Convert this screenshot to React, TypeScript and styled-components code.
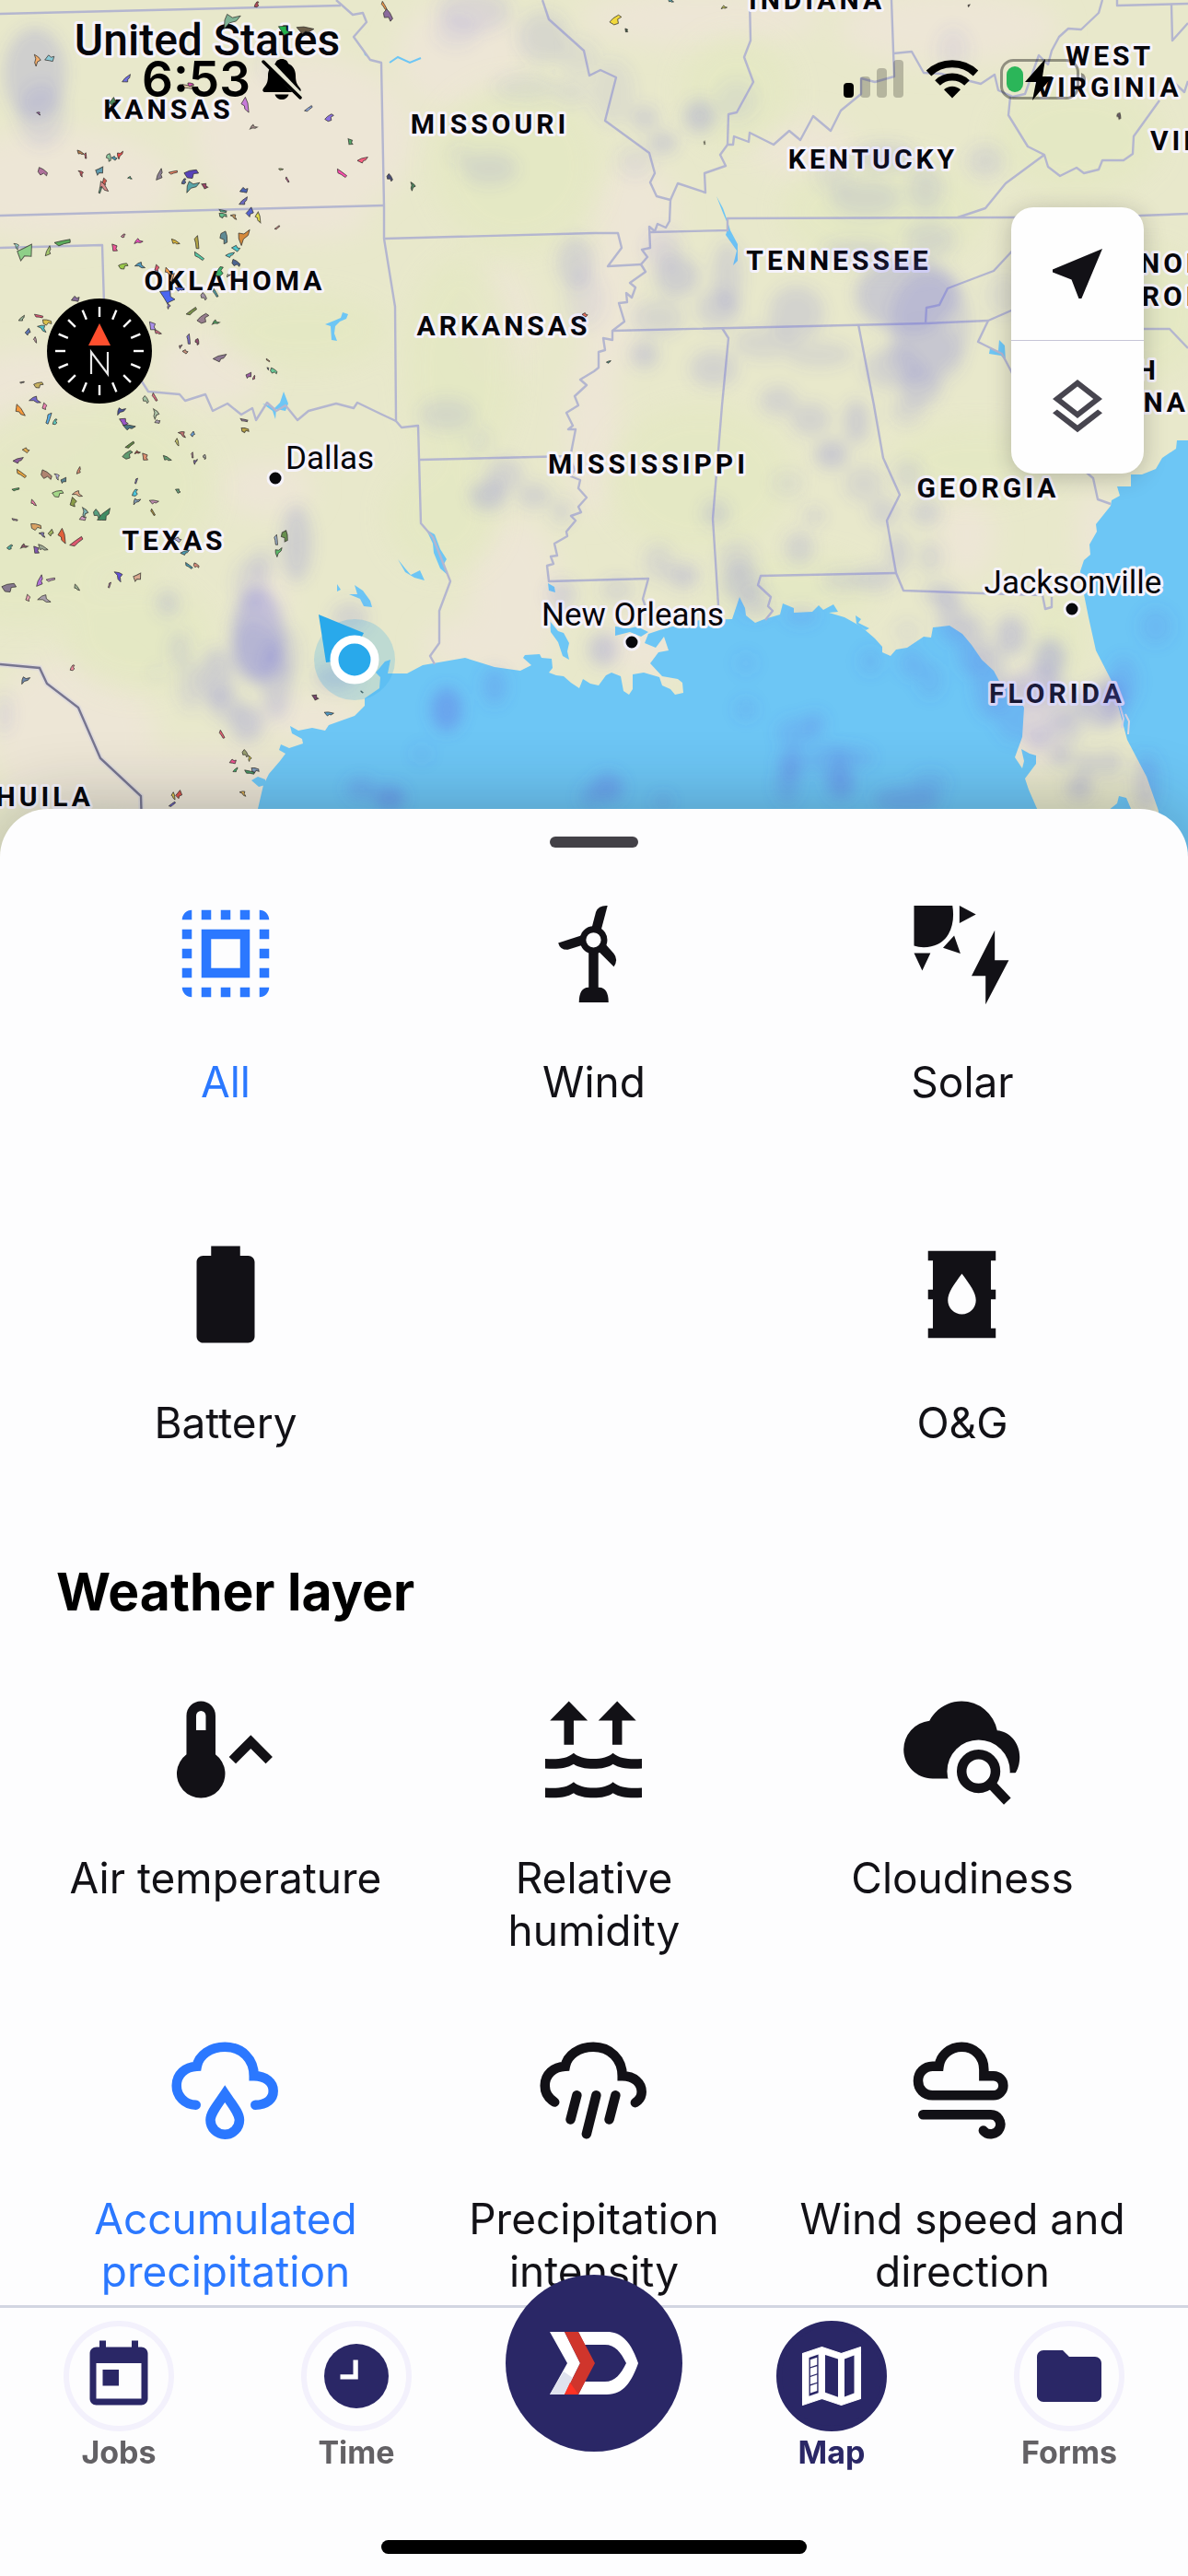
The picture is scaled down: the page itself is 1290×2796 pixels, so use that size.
import React from "react";
import styled, { createGlobalStyle } from "styled-components";
import { MdOutlineLayers, MdNearMe, MdFolder } from "react-icons/md";

const GlobalStyle = createGlobalStyle`
  *, *::before, *::after { box-sizing: border-box; }
  body {
    margin: 0;
    background: #fdfdfe;
    font-family: Inter, "Liberation Sans", sans-serif;
    -webkit-font-smoothing: antialiased;
  }
  button { font: inherit; color: inherit; background: none; border: 0; padding: 0; cursor: pointer; }
`;

const Page = styled.div`
  display: flex;
  flex-direction: column;
  min-height: 100vh;
`;

/* ---------- map ---------- */

const MapStage = styled.section`
  position: relative;
  height: 930px;
  overflow: hidden;
  background: #e8e8cb;
`;

const MapCanvas = styled.svg`
  display: block;
  width: 100%;
  height: 100%;
`;

const MapLabel = styled.text<{ $kind: "state" | "city" | "country" }>`
  font-family: Roboto, "Liberation Sans", sans-serif;
  font-size: ${(p) => ({ state: 30, city: 35, country: 48 })[p.$kind]}px;
  font-weight: ${(p) => ({ state: 700, city: 400, country: 500 })[p.$kind]};
  letter-spacing: ${(p) => (p.$kind === "state" ? 4 : 0)}px;
  fill: #06060a;
  stroke: #f6f3fb;
  stroke-width: 6px;
  stroke-linejoin: round;
  paint-order: stroke;
`;

type Point = [number, number];

const waterways = [
  "280,930 280,878 286,852 292,840 304,826 310,818 303,814 305,808 314,812 329,807 328,802 317,796 315,788 324,793 339,790 353,793 357,787 385,777 396,766 396,758 412,747 413,735 408,730 418,718 424,716 421,731 442,731 459,722 505,714 537,724 565,728 577,722 568,714 570,711 586,710 588,714 599,715 600,725 596,730 604,733 612,734 620,741 629,747 633,737 641,742 650,744 658,733 664,730 674,734 677,750 683,754 687,748 687,732 699,730 716,735 719,744 728,748 733,754 742,752 741,741 736,737 719,734 706,720 715,708 726,706 721,691 712,703 700,698 704,688 716,684 730,680 760,673 795,672 803,648 809,660 810,668 820,676 830,672 847,667 850,655 862,660 862,665 882,664 889,657 894,662 905,656 910,664 900,665 917,670 935,680 950,693 958,702 958,708 967,712 973,705 985,703 1003,691 1011,692 1013,681 1031,679 1045,688 1055,700 1066,716 1079,728 1086,741 1100,750 1112,768 1110,800 1102,822 1110,834 1112,826 1109,813 1118,818 1125,820 1125,829 1113,845 1117,857 1127,880 1127,930",
  "1258,930 1258,880 1245,843 1224,803 1207,739 1190,706 1182,670 1176,640 1173,620 1177,608 1184,602 1183,591 1191,577 1190,569 1206,549 1207,543 1216,538 1213,528 1228,528 1228,515 1240,515 1255,509 1262,497 1277,487 1278,478 1290,478 1290,930",
  "1203,880 1213,872 1215,864 1223,866 1229,880",
  "353,352 363,348 370,345 372,339 378,341 376,346 369,349 364,354 363,362 366,370 360,369 359,354",
  "285,438 292,440 298,443 304,437 308,425 313,438 310,446 300,444 299,455 296,446",
  "778,213 785,226 790,240 793,250 801,265 801,283 796,288 800,272 788,255 791,245 785,231",
  "393,51 400,62 396,60",
  "463,575 472,580 478,596 485,607 482,612 486,624 478,617 471,600 470,590",
  "432,607 440,617 446,624 456,619 461,630 450,627 440,621",
  "366,634 370,640 366,642",
  "385,635 394,641 402,652 404,659 395,658 391,650 379,645 388,645",
  "595,633 602,637 603,643 596,641",
  "597,674 606,685 612,687 618,698 616,707 618,716 611,712 606,697 598,686",
  "668,680 683,682 692,680 704,686 696,691 684,686 668,690",
  "273,847 280,843 288,846 288,852 281,854",
  "1085,369 1091,375 1092,392 1087,386 1074,384 1075,378 1084,381",
  "929,668 935,672 932,676 944,682 940,684 930,677",
];

const borders = [
  "0,15 370,6",
  "365,0 383,16 394,14 398,24 384,40 402,65 414,68 417,224 417,259 429,333 430,457 436,464 454,462 457,568 470,583 489,631 477,663 477,698 467,712 472,721",
  "0,234 417,223",
  "417,259 645,253 671,253 675,269 660,289 696,287",
  "456,499 620,495",
  "0,269 111,266 113,330 145,400 161,425 195,428 201,435 223,428 231,446 247,438 262,450 274,443 278,456 290,437 300,446 310,440 323,456 335,446 365,438 384,443 388,437 415,450 430,457",
  "589,0 596,21 634,55 640,82 652,76 669,84 657,131 705,166 711,188 706,198 713,213 728,217 727,240 723,247 714,243 711,251 705,246 706,269 697,271 703,279 696,287 701,295 684,307 690,312 686,323 680,318 681,328 672,329 678,349 665,359 665,369 655,367 657,380 650,382 650,399 645,403 630,412 637,418 624,430 628,440 615,448 622,462 617,466 625,466 619,497 624,510 620,517 630,521 628,530 637,540 628,550 631,556 620,560 625,565 615,577 616,582 602,590 605,603 598,604 601,612 594,614 596,631 704,628 698,650 704,668",
  "706,252 790,250 790,237 1098,236 1238,234 1290,232",
  "728,217 736,199 766,209 765,188 788,180 782,168 790,157 796,157 797,148 813,154 814,144 840,157 857,142 869,152 883,126 902,142 913,120 935,102 935,85 950,89 971,83 968,0",
  "814,0 815,44 808,62 818,89 800,122 791,124 790,157",
  "970,58 990,56 1003,79 1022,80 1065,91 1080,81 1084,98 1100,105 1113,102 1128,60 1138,70 1142,55 1150,40 1160,31 1174,32 1193,14 1197,0",
  "1097,105 1095,125 1116,159 1134,168 1138,181 1151,191 1169,182 1177,188 1193,184 1197,174 1220,174 1230,167 1231,148 1259,109",
  "1134,168 1092,199 1070,226 1040,236",
  "665,359 1005,351 1073,348 1105,334",
  "1105,266 1079,294 1029,313 1020,331 1006,334 1005,351",
  "1073,348 1062,371 1088,384 1098,403 1130,470 1180,513 1187,519 1192,542 1206,547",
  "784,356 791,367 784,440 774,563 780,657",
  "932,352 949,440 959,497 977,537 963,565 973,622 981,641 1066,644 1132,646 1135,661 1142,659 1142,648",
  "973,622 826,625 823,635 837,648 834,658 839,663 831,673",
  "1242,357 1270,357 1290,378",
  "1213,0 1213,6 1290,4",
  "1272,5 1273,44 1290,25",
  "1270,85 1286,100 1290,88",
];

/* [cx, cy, rx, ry] of pale ground and greener ground */
const sandPatches = [
  [330, 150, 120, 90], [60, 200, 130, 60], [330, 240, 70, 20], [690, 235, 45, 60], [660, 340, 30, 70],
  [645, 470, 30, 90], [560, 650, 50, 90], [520, 700, 60, 30], [760, 20, 130, 30], [1030, 30, 120, 40],
  [30, 440, 80, 60], [80, 800, 90, 90], [220, 860, 120, 50], [340, 780, 60, 25], [290, 650, 24, 30],
  [700, 700, 40, 40], [500, 60, 70, 60], [1120, 780, 30, 60], [1050, 580, 30, 50], [290, 530, 50, 30],
  [1190, 580, 20, 50], [540, 350, 40, 60], [870, 160, 60, 30], [230, 400, 60, 40],
] as const;
const greenPatches = [
  [560, 180, 90, 90], [1170, 150, 90, 60], [500, 400, 60, 120], [760, 520, 100, 80], [860, 640, 90, 40],
  [480, 560, 60, 60], [90, 530, 140, 100], [960, 230, 110, 60], [800, 100, 60, 60], [20, 620, 90, 60],
  [1060, 500, 90, 40], [1150, 690, 30, 50], [150, 690, 80, 60], [330, 360, 90, 40], [1250, 340, 60, 70],
] as const;

/* precipitation cells: [cx, cy, rx, ry, strength] */
const rainCells = [
  [38, 80, 34, 50, 5], [45, 125, 26, 35, 3], [515, 12, 40, 24, 3], [495, 35, 24, 18, 2], [590, 40, 28, 28, 3],
  [628, 62, 22, 20, 2], [570, 95, 34, 15, 2], [620, 100, 20, 14, 2], [532, 183, 30, 18, 3], [500, 168, 12, 10, 2],
  [625, 285, 20, 28, 4], [635, 325, 22, 30, 2], [295, 72, 12, 14, 2], [665, 100, 24, 36, 2], [700, 128, 15, 14, 4],
  [760, 126, 17, 18, 6], [720, 155, 15, 12, 5], [690, 175, 20, 18, 2], [800, 110, 22, 22, 2], [1035, 55, 18, 26, 2],
  [960, 170, 34, 16, 3], [905, 190, 20, 20, 2], [940, 215, 38, 20, 3], [1005, 205, 20, 24, 3], [1070, 175, 20, 18, 3],
  [735, 300, 24, 22, 5], [715, 345, 28, 20, 3], [720, 270, 20, 20, 3], [790, 300, 16, 38, 4], [780, 335, 24, 20, 4],
  [865, 340, 30, 30, 4], [700, 385, 15, 15, 5], [775, 400, 26, 20, 4], [830, 372, 34, 18, 3], [890, 385, 36, 14, 3],
  [985, 320, 56, 40, 6], [1010, 350, 44, 56, 4], [1005, 385, 42, 34, 3],
  [968, 400, 30, 22, 4], [1000, 420, 22, 20, 5], [1010, 260, 28, 20, 3], [930, 272, 38, 12, 3], [1090, 320, 20, 24, 2],
  [845, 435, 20, 16, 4], [880, 455, 22, 18, 4], [930, 458, 14, 24, 5], [903, 493, 18, 16, 6], [985, 445, 18, 16, 3],
  [855, 525, 18, 14, 2], [938, 525, 22, 20, 3], [986, 515, 15, 16, 3], [777, 557, 15, 15, 4], [960, 556, 17, 15, 4],
  [1005, 556, 17, 15, 4], [884, 560, 12, 10, 3], [868, 595, 16, 18, 4], [975, 600, 13, 22, 4], [1010, 605, 13, 18, 3],
  [742, 625, 17, 14, 5], [715, 610, 16, 20, 3], [805, 632, 22, 20, 5], [800, 605, 20, 18, 3], [820, 655, 18, 16, 4],
  [915, 630, 22, 12, 3], [950, 628, 22, 14, 4], [1020, 645, 16, 12, 5], [1033, 670, 15, 28, 5], [1055, 700, 16, 34, 5],
  [1075, 740, 18, 40, 5], [1098, 690, 17, 22, 6], [1140, 715, 17, 22, 7], [1125, 742, 26, 18, 5], [1150, 765, 32, 24, 4],
  [1195, 765, 22, 26, 6], [1210, 760, 14, 26, 5], [1128, 800, 15, 15, 6], [1158, 792, 18, 16, 4], [1152, 820, 12, 11, 6],
  [1180, 830, 13, 14, 4], [1205, 828, 13, 14, 4], [1172, 855, 14, 13, 6], [1245, 850, 14, 32, 5], [1100, 770, 20, 34, 4],
  [1255, 680, 18, 20, 3], [1220, 740, 16, 28, 4], [865, 795, 22, 16, 4], [885, 785, 11, 12, 5], [860, 828, 14, 17, 7],
  [855, 852, 13, 20, 5], [900, 825, 22, 18, 4], [913, 850, 15, 17, 8], [925, 822, 24, 12, 4], [945, 718, 12, 14, 3],
  [990, 720, 13, 16, 4], [1010, 738, 14, 20, 3], [810, 770, 12, 12, 3], [810, 720, 12, 12, 2], [870, 668, 18, 10, 4],
  [660, 855, 17, 16, 8], [720, 870, 10, 8, 5], [985, 868, 36, 14, 6], [1010, 850, 20, 14, 3], [485, 770, 17, 24, 9],
  [537, 745, 13, 20, 5], [392, 856, 16, 12, 6], [423, 866, 17, 13, 9], [458, 818, 12, 10, 2], [640, 865, 10, 14, 5],
  [280, 690, 28, 52, 8], [275, 705, 24, 30, 3], [235, 735, 18, 32, 5], [245, 765, 18, 18, 4], [207, 745, 14, 26, 3],
  [268, 785, 18, 20, 6], [300, 740, 16, 42, 5], [310, 710, 16, 30, 3], [322, 590, 17, 42, 5], [285, 612, 13, 18, 3],
  [272, 632, 18, 26, 3], [182, 655, 13, 15, 4], [195, 705, 12, 20, 3], [170, 730, 6, 8, 2], [365, 735, 24, 14, 5],
  [380, 670, 20, 16, 4], [530, 538, 20, 16, 6], [548, 515, 20, 18, 4], [580, 538, 18, 14, 4], [485, 450, 30, 18, 3],
  [520, 478, 12, 14, 2], [610, 555, 12, 14, 3], [610, 645, 16, 16, 4], [655, 705, 16, 18, 6], [670, 640, 18, 14, 3],
  [5, 775, 8, 22, 3], [985, 685, 14, 12, 2],
] as const;

/* solar parcels: [x, y, size, colour] */
const parcels: [number, number, number, string][] = [
  [279, 5, 4, "#b5485a"], [250, 22, 14, "#7fb295"], [308, 33, 9, "#22b14c"], [331, 33, 11, "#6b5d49"], [417, 6, 6, "#f2994a"],
  [421, 17, 8, "#8a6a9c"], [40, 65, 8, "#f4ae6b"], [54, 64, 7, "#89c9d6"], [138, 86, 7, "#6f6fe0"], [204, 94, 8, "#dfc9a8"],
  [207, 92, 4, "#d64fb0"], [42, 123, 3, "#b36acb"], [122, 110, 6, "#4b8a5c"], [266, 114, 10, "#c77ad9"], [335, 118, 6, "#8aa4dd"],
  [358, 128, 6, "#8b70e0"], [275, 138, 5, "#b59a9a"], [380, 154, 5, "#55a96a"], [87, 166, 5, "#b37b4e"], [93, 169, 4, "#e2536d"],
  [118, 171, 5, "#8cc7a0"], [130, 168, 6, "#ee4a4a"], [124, 172, 4, "#4a98b5"], [394, 174, 7, "#ff5f82"], [371, 188, 8, "#ff4fb0"],
  [46, 187, 7, "#b0719c"], [88, 188, 5, "#c0535d"], [108, 185, 7, "#5f9cb0"], [174, 190, 8, "#8b7f93"], [188, 187, 6, "#f08362"],
  [208, 189, 9, "#5843b8"], [141, 193, 3, "#49b58c"], [113, 197, 5, "#d15b50"], [112, 203, 8, "#d98c8c"], [109, 206, 5, "#5c9b80"],
  [200, 197, 4, "#52629a"], [208, 202, 11, "#59a5a8"], [222, 202, 5, "#a0456b"], [305, 184, 3, "#9db56e"], [312, 195, 4, "#c5639a"],
  [423, 193, 5, "#4a4f78"], [448, 202, 6, "#4d8560"], [265, 207, 6, "#4b63b3"], [265, 219, 7, "#6c6ac0"], [242, 229, 5, "#4fb59a"],
  [242, 234, 5, "#63c08c"], [254, 235, 5, "#c99a62"], [271, 230, 7, "#5563cf"], [280, 236, 7, "#e6e04c"], [301, 247, 4, "#ce8d8b"],
  [134, 256, 3, "#c97f9b"], [150, 262, 6, "#ee4fc0"], [124, 269, 6, "#ee5797"], [190, 263, 6, "#d5b23a"], [214, 263, 9, "#b3a546"],
  [243, 258, 8, "#5f8b95"], [264, 257, 12, "#d58a3c"], [256, 270, 6, "#4cc7cc"], [250, 277, 6, "#52c9cc"], [216, 278, 8, "#56c9a6"],
  [256, 286, 6, "#4c6590"], [18, 267, 5, "#9bdcd3"], [27, 273, 14, "#8ecf88"], [53, 273, 7, "#a5c86b"], [68, 263, 11, "#5bab5b"],
  [134, 289, 6, "#9bc94a"], [152, 288, 7, "#4f9ac0"], [170, 291, 5, "#de5872"], [182, 295, 6, "#ef9c4c"], [187, 301, 6, "#e8a878"],
  [239, 295, 7, "#3bb36c"], [248, 299, 3, "#b4b4a4"], [181, 322, 12, "#4a66f0"], [195, 314, 6, "#4a66f0"], [234, 318, 6, "#4f9ea6"],
  [221, 322, 5, "#a494a8"], [183, 332, 4, "#8e7fd6"], [82, 325, 6, "#856c98"], [24, 346, 5, "#8fae92"], [42, 343, 6, "#e8577b"],
  [51, 350, 6, "#d9c04c"], [46, 356, 7, "#4cc0c7"], [30, 360, 5, "#6078b5"], [38, 369, 4, "#c29bab"], [208, 338, 8, "#79904a"],
  [221, 346, 8, "#977e8e"], [234, 350, 5, "#50b067"], [165, 354, 7, "#a98fea"], [171, 361, 5, "#c96c80"], [205, 368, 7, "#8072d3"],
  [214, 371, 4, "#934c70"], [196, 376, 3, "#9a6b88"], [201, 382, 4, "#c8907a"], [239, 389, 9, "#8e7893"], [291, 391, 3, "#c89070"],
  [297, 403, 5, "#67c795"], [291, 400, 2, "#4b559a"], [270, 407, 5, "#9c5ca5"], [276, 410, 3, "#d86292"], [24, 415, 3, "#8f8f92"],
  [42, 418, 6, "#c6b060"], [38, 434, 8, "#7368c8"], [48, 441, 5, "#ee82b5"], [21, 446, 9, "#f5993c"], [53, 454, 8, "#57b3ee"],
  [60, 458, 4, "#5ecac0"], [131, 446, 7, "#48529d"], [134, 458, 7, "#9a55c9"], [140, 464, 8, "#4a7481"], [168, 431, 6, "#e06c86"],
  [158, 434, 5, "#a5c5a5"], [169, 449, 7, "#b3cbad"], [171, 458, 4, "#b0a5b8"], [141, 420, 5, "#d88140"], [265, 456, 5, "#9a80a8"],
  [266, 467, 5, "#baa348"], [198, 471, 6, "#bf7272"], [209, 471, 4, "#6aa0d8"], [192, 480, 5, "#c4c26a"], [141, 483, 7, "#5f8745"],
  [139, 494, 7, "#5f9b70"], [149, 491, 4, "#9d4b48"], [157, 496, 6, "#dd9070"], [181, 498, 6, "#5f9b70"], [209, 494, 4, "#c993b0"],
  [222, 496, 3, "#a5a5a5"], [212, 501, 4, "#7b67a8"], [28, 489, 5, "#e3ae52"], [20, 500, 7, "#8f5fa0"], [23, 514, 8, "#e5a440"],
  [50, 516, 8, "#af8470"], [62, 517, 5, "#b9b4e6"], [69, 521, 5, "#568594"], [86, 511, 5, "#d98b6d"], [17, 531, 5, "#4fae64"],
  [63, 536, 7, "#a4d788"], [84, 536, 7, "#e0a785"], [79, 545, 7, "#8a9c49"], [36, 546, 5, "#eb7ca6"], [148, 522, 4, "#8377d6"],
  [147, 535, 5, "#4cc8dd"], [148, 544, 6, "#7f99b0"], [193, 533, 4, "#65a07b"], [167, 545, 6, "#bc8caf"], [166, 556, 5, "#a58c3c"],
  [105, 558, 6, "#57a080"], [92, 556, 7, "#7fb8ba"], [90, 563, 5, "#d29abf"], [114, 560, 11, "#3f8c62"], [16, 564, 4, "#b28cba"],
  [39, 572, 7, "#d9a263"], [46, 580, 5, "#7f77b5"], [55, 578, 5, "#a0b560"], [67, 582, 10, "#e1603b"], [83, 588, 10, "#dd5870"],
  [11, 594, 4, "#52b0a0"], [26, 593, 5, "#9a5a75"], [39, 597, 6, "#8259b3"], [46, 595, 7, "#9da893"], [300, 586, 7, "#9db3cf"],
  [309, 582, 7, "#68904f"], [302, 599, 7, "#5dbb6b"], [193, 586, 5, "#b5add9"], [201, 600, 6, "#4c9ab0"], [205, 614, 6, "#4b9ab0"],
  [213, 614, 4, "#d98a78"], [129, 625, 8, "#6152d6"], [149, 626, 7, "#d9a890"], [44, 631, 8, "#b072d9"], [55, 629, 6, "#c89bc9"],
  [10, 638, 9, "#877a90"], [48, 650, 9, "#a9a0ac"], [30, 649, 5, "#e5a0b0"], [83, 638, 5, "#9db595"], [119, 635, 4, "#c07fb5"],
  [79, 725, 4, "#ec8b9c"], [27, 738, 7, "#6f89ab"], [342, 757, 5, "#7a456f"], [357, 775, 6, "#4c98c7"], [241, 797, 6, "#ee5f76"],
  [266, 818, 5, "#9aa070"], [271, 823, 4, "#ded34a"], [253, 827, 5, "#ee5490"], [256, 836, 4, "#45b670"], [271, 838, 7, "#489b67"],
  [277, 836, 5, "#7f98b8"], [264, 861, 5, "#e8b552"], [194, 862, 6, "#dd5449"], [188, 864, 5, "#e0c84b"], [187, 873, 5, "#6c5fd0"],
  [669, 22, 8, "#f2d93c"], [786, 8, 4, "#c6cb58"], [680, 33, 3, "#42614c"], [728, 1, 4, "#58a9b0"], [765, 155, 2, "#b3b36a"],
  [1215, 126, 4, "#6b5d6a"], [1052, 6, 2, "#655055"], [635, 342, 4, "#e86a58"], [661, 393, 3, "#4c9b8c"], [393, 751, 2, "#5a9b78"],
];

const parcelShapes = [
  "-1,-.5 -.2,-.7 .8,-.6 1,.1 .3,0 0,.8 -.7,.5",
  "-.9,.4 -.4,-.4 .1,-.8 .3,-.1 1,.3 .4,.5 -.2,.2",
  "-.6,-.9 .5,-.7 .4,.1 .8,.6 -.1,.9 -.3,.1",
  "-1,-.2 -.2,-.5 1,-.5 .5,.1 .1,.1 -.2,.6 -.6,.2",
  "-.8,-.7 .1,-.2 .9,.3 .7,.7 0,.3 -.6,.1",
];

const placeNames: { text: string; at: Point; kind: "state" | "city" | "country"; anchor?: "end" | "middle" }[] = [
  { text: "United States", at: [225, 60], kind: "country", anchor: "middle" },
  { text: "KANSAS", at: [183, 129], kind: "state", anchor: "middle" },
  { text: "MISSOURI", at: [532, 145], kind: "state", anchor: "middle" },
  { text: "OKLAHOMA", at: [255, 315], kind: "state", anchor: "middle" },
  { text: "ARKANSAS", at: [547, 364], kind: "state", anchor: "middle" },
  { text: "INDIANA", at: [887, 10], kind: "state", anchor: "middle" },
  { text: "KENTUCKY", at: [948, 183], kind: "state", anchor: "middle" },
  { text: "TENNESSEE", at: [911, 293], kind: "state", anchor: "middle" },
  { text: "WEST", at: [1205, 71], kind: "state", anchor: "middle" },
  { text: "VIRGINIA", at: [1204, 105], kind: "state", anchor: "middle" },
  { text: "VIRGINIA", at: [1249, 163], kind: "state" },
  { text: "NORTH", at: [1238, 296], kind: "state" },
  { text: "CAROLINA", at: [1192, 332], kind: "state" },
  { text: "SOUTH", at: [1259, 412], kind: "state", anchor: "end" },
  { text: "CAROLINA", at: [1291, 447], kind: "state", anchor: "end" },
  { text: "MISSISSIPPI", at: [704, 514], kind: "state", anchor: "middle" },
  { text: "GEORGIA", at: [1073, 540], kind: "state", anchor: "middle" },
  { text: "TEXAS", at: [189, 597], kind: "state", anchor: "middle" },
  { text: "FLORIDA", at: [1148, 763], kind: "state", anchor: "middle" },
  { text: "COAHUILA", at: [102, 875], kind: "state", anchor: "end" },
  { text: "Dallas", at: [358, 509], kind: "city", anchor: "middle" },
  { text: "New Orleans", at: [687, 679], kind: "city", anchor: "middle" },
  { text: "Jacksonville", at: [1165, 644], kind: "city", anchor: "middle" },
];

const cityDots: Point[] = [[299, 519], [686, 697], [1164, 661]];

function WeatherMap() {
  return (
    <MapCanvas viewBox="0 0 1290 930" preserveAspectRatio="xMidYMin slice" role="img" aria-label="Weather map">
      <defs>
        <filter id="soft" x="-40%" y="-40%" width="180%" height="180%">
          <feGaussianBlur stdDeviation="14" />
        </filter>
        <filter id="cells" x="0" y="0" width="1290" height="930" filterUnits="userSpaceOnUse">
          <feGaussianBlur stdDeviation="8" />
        </filter>
      </defs>
      <rect width="1290" height="930" fill="#e8e8cb" />
      <g fill="#ede6d6" filter="url(#soft)">
        {sandPatches.map(([x, y, rx, ry], i) => <ellipse key={i} cx={x} cy={y} rx={rx} ry={ry} />)}
      </g>
      <g fill="#e4e8c3" opacity="0.8" filter="url(#soft)">
        {greenPatches.map(([x, y, rx, ry], i) => <ellipse key={i} cx={x} cy={y} rx={rx} ry={ry} />)}
      </g>
      <g fill="#6dc6f5">
        {waterways.map((points, i) => <polygon key={i} points={points} />)}
      </g>
      <path d="M423 68L432 62L445 68L457 63" fill="none" stroke="#6dc6f5" strokeWidth="2" />
      <path d="M1216 766l4 14l-2 10M1222 775l4 8l-1 14" fill="none" stroke="#ded9df" strokeWidth="2" />
      <g fill="none" stroke="#b4b6cf" strokeWidth="2.4" strokeLinejoin="round">
        {borders.map((points, i) => <polyline key={i} points={points} />)}
      </g>
      <polyline points="0,721 43,725 51,742 85,768 109,823 153,864 155,930" fill="none" stroke="#e0dcdc" strokeWidth="6" />
      <polyline points="0,721 43,725 51,742 85,768 109,823 153,864 155,930" fill="none" stroke="#77758f" strokeWidth="2.4" />
      {cityDots.map(([x, y]) => (
        <circle key={x} cx={x} cy={y} r="8" fill="#08080c" stroke="#f6f3fb" strokeWidth="3" />
      ))}
      {placeNames.map((p, i) => (
        <MapLabel key={i} $kind={p.kind} x={p.at[0]} y={p.at[1]} textAnchor={p.anchor ?? "start"}>
          {p.text}
        </MapLabel>
      ))}
      <g fill="#6464e0" filter="url(#cells)">
        {rainCells.map(([x, y, rx, ry, s], i) => (
          <ellipse key={i} cx={x} cy={y} rx={rx} ry={ry} opacity={s * 0.038} />
        ))}
      </g>
      <g stroke="#33302c" strokeWidth="1" strokeOpacity="0.75">
        {parcels.map(([x, y, size, colour], i) => (
          <polygon
            key={i}
            points={parcelShapes[i % parcelShapes.length]}
            fill={colour}
            vectorEffect="non-scaling-stroke"
            transform={`translate(${x} ${y}) rotate(${(i % 7) * 24 - 60}) scale(${size * 0.85} ${size * 0.65})`}
          />
        ))}
      </g>
      <circle cx="385" cy="716" r="44" fill="#29a9eb" opacity="0.22" />
      <polygon points="346,667 395,687 380,716 354,719" fill="#29a9eb" />
      <circle cx="385" cy="716" r="22" fill="#29a9eb" stroke="#fff" strokeWidth="9" />
    </MapCanvas>
  );
}

const StatusBar = styled.header`
  position: absolute;
  top: 0;
  left: 0;
  right: 0;
  display: flex;
  align-items: center;
  justify-content: space-between;
  padding: 54px 110px 0 154px;
  color: #000;
`;

const StatusGroup = styled.div<{ $gap: number }>`
  display: flex;
  align-items: center;
  gap: ${(p) => p.$gap}px;
`;

const Clock = styled.time`
  font-size: 53px;
  line-height: 64px;
  font-weight: 600;
`;

const Compass = styled.button`
  position: absolute;
  top: 324px;
  left: 51px;
  width: 114px;
  height: 114px;
`;

const MapTools = styled.div`
  position: absolute;
  top: 225px;
  right: 48px;
  display: flex;
  flex-direction: column;
  width: 144px;
  border-radius: 24px;
  background: #fefefe;
  box-shadow: 0 4px 24px rgba(30, 30, 50, 0.25);
`;

const ToolButton = styled.button<{ $tone: string }>`
  display: grid;
  place-items: center;
  height: 144px;
  color: ${(p) => p.$tone};
  & + & { border-top: 1px solid #c6c5d6; height: 145px; }
`;

/* ---------- bottom sheet ---------- */

const Sheet = styled.main`
  position: relative;
  flex: 1;
  margin-top: -52px;
  padding: 30px 45px 8px;
  border-radius: 52px 52px 0 0;
  background: #fdfdfe;
  box-shadow: 0 0 80px rgba(20, 30, 40, 0.3);
`;

const Handle = styled.div`
  width: 96px;
  height: 12px;
  margin: 0 auto 52px;
  border-radius: 6px;
  background: #434147;
`;

const LayerGrid = styled.div`
  display: grid;
  grid-template-columns: repeat(3, minmax(0, 1fr));
  row-gap: 82px;
`;

const LayerButton = styled.button<{ $active?: boolean; $column?: number }>`
  display: flex;
  flex-direction: column;
  align-items: center;
  gap: 48px;
  min-height: 288px;
  padding: 0 18px;
  grid-column: ${(p) => p.$column ?? "auto"};
  color: ${(p) => (p.$active ? "#2b78ff" : "#121116")};
`;

const LayerIcon = styled.svg`
  display: block;
  flex: none;
  width: 126px;
  height: 126px;
  overflow: visible;
  fill: currentColor;
`;

const LayerName = styled.span`
  font-size: 46px;
  line-height: 57px;
  text-align: center;
`;

const SheetTitle = styled.h2`
  margin: 62px 0 72px 16px;
  font-size: 57px;
  line-height: 72px;
  font-weight: 700;
  color: #000;
`;

const strokeProps = {
  fill: "none",
  stroke: "currentColor",
  strokeWidth: 2,
  strokeLinecap: "round" as const,
};

const icons: Record<string, React.ReactNode> = {
  all: (
    <path d="M3 5h2V3c-1.100 0-2 .9-2 2zm0 8h2v-2H3v2zm4 8h2v-2H7v2zM3 9h2V7H3v2zm10-6h-2v2h2V3zm6 0v2h2c0-1.100-.9-2-2-2zM5 21v-2H3c0 1.100.9 2 2 2zm-2-4h2v-2H3v2zM9 3H7v2h2V3zm2 18h2v-2h-2v2zm8-8h2v-2h-2v2zm0 8c1.100 0 2-.9 2-2h-2v2zm0-12h2V7h-2v2zm0 8h2v-2h-2v2zm-4 4h2v-2h-2v2zm0-16h2V3h-2v2zM7 17h10V7H7v10zm2-8h6v6H9V9z" />
  ),
  wind: (
    <>
      <path d="M11.500 6.800L12.400 3.400Q12.900 2 14.800 2.100L13.500 7z" />
      <path d="M9.300 8.300L4.600 9.800Q5 11.300 6.600 11.200L9.800 10.200z" />
      <path d="M14.500 10.200L16.100 12Q17.100 13.300 16.100 14.700L12.900 11.500z" />
      <path d="M10.900 11h2v8h.2q1.900.1 1.900 3.100H8.900q0-3 1.900-3.100h.1z" />
      <circle cx="11.900" cy="9.200" r="2.200" fill="#fdfdfe" stroke="currentColor" strokeWidth="1.300" />
    </>
  ),
  solar: (
    <path d="M2 2.100H9.950C10.700 6.600 8.800 10.700 4 10.700Q2.900 10.700 2 10.400zM11.400 2.100L14.800 3.900L11.400 5.700zM10.300 8.300L11.600 12L8 10.800zM2 11.900H5.400L3.700 15.500zM18.700 7.200V13.400H21.600L16.800 22.500V16.600H13.900z" />
  ),
  battery: (
    <path d="M16.670 4H15V2H9v2H7.330C6.600 4 6 4.600 6 5.330v15.330C6 21.400 6.600 22 7.330 22h9.330c.74 0 1.340-.6 1.340-1.330V5.330C18 4.600 17.400 4 16.670 4z" />
  ),
  oil: (
    <>
      <path d="M4.900 3H18.900V5H17.900V11H18.900V13H17.900V19H18.900V21H4.900V19H5.900V13H4.900V11H5.900V5H4.900z" />
      <path fill="#fdfdfe" d="M11.900 7.700C10.200 10 9 11.600 9 13.200a2.900 2.900 0 0 0 5.800 0C14.800 11.600 13.600 10 11.900 7.700z" />
    </>
  ),
  temperature: (
    <path fillRule="evenodd" d="M3.900 5a3 3 0 0 1 6 0V13a5 5 0 1 1-6 0zM5.900 8H7.900V5a1 1 0 0 0-2 0zM17.200 9L21.700 13.500L20.300 14.900L17.200 11.800L14.100 14.900L12.700 13.500z" />
  ),
  humidity: (
    <>
      <path d="M6.800 2L10.700 6H7.800V11H5.800V6H2.900zM16.800 2L20.700 6H17.800V11H15.800V6H12.900z" />
      {[0, 6].map((dy) => (
        <path
          key={dy}
          transform={`translate(0 ${dy})`}
          d="M1.900 13.900C4.400 14 6.200 14 7.800 12.700C9.400 14.300 14.400 14.300 15.900 12.700C17.500 14 19.400 14 21.900 13.900V15.900C19.400 16 17.500 16 15.900 15C14.400 16.300 9.400 16.300 7.800 15C6.200 16 4.400 16 1.900 15.900z"
        />
      ))}
    </>
  ),
  cloudiness: (
    <>
      <path d="M19.200 8.040A7.490 7.490 0 0 0 11.850 2C8.960 2 6.450 3.640 5.200 6.040A5.994 5.994 0 0 0-.15 12c0 3.310 2.690 6 6 6h9l8-1c.6-.8 1-2 1-3.500 0-2.900-2.050-5.280-4.650-5.460z" />
      <circle cx="15.350" cy="16.500" r="6.500" fill="#fdfdfe" />
      <path d="M15.350 16.800H24V20H15.350z" fill="#fdfdfe" />
      <circle cx="15.350" cy="16.500" r="3.500" fill="none" stroke="currentColor" strokeWidth="2" />
      <path d="M17.700 18.900L21.300 22.700" stroke="currentColor" strokeWidth="2" />
    </>
  ),
  accumulated: (
    <g {...strokeProps} transform="translate(-0.15 0)">
      <path d="M6 15C3.500 14.900 2 13 2 11C2 8.700 3.800 7.100 6.200 7C6.600 4.700 9 3 12 3C15.500 3 18 5.500 18 9C20.500 9 22 10.400 22 12.100C22 13.800 20.600 15 18.300 15" />
      <path strokeLinejoin="miter" d="M12 12.700C10.300 15.200 9 16.700 9 18.100a3 3 0 0 0 6 0C15 16.700 13.700 15.200 12 12.700z" />
    </g>
  ),
  intensity: (
    <g {...strokeProps} transform="translate(-0.15 0)">
      <path d="M4 14.400C2.700 13.600 2 12.400 2 11C2 8.700 3.800 7.100 6.200 7C6.600 4.700 9 3 12 3C15.500 3 18 5.500 18 9C20.500 9 22 10.500 22 12.300C22 13.200 21.500 14 20.700 14.500" />
      <path d="M8.600 13L7.300 18M12.600 13L10.600 21M16.600 13L15.300 18" />
    </g>
  ),
  windSpeed: (
    <g {...strokeProps} transform="translate(-0.15 0)">
      <path d="M6 13C4.200 13 3 11.700 3 10C3 8.300 4.300 7 6 7H7.300C7.600 4.700 9.600 3 12 3C14.700 3 16.600 5 16.600 7.700V9H18.600A2 2 0 0 1 18.600 13z" />
      <path d="M4 17H18A2 2 0 1 1 16.500 20.300" />
    </g>
  ),
};

function Layer({ icon, name, active, column }: { icon: string; name: string; active?: boolean; column?: number }) {
  return (
    <LayerButton type="button" $active={active} $column={column} aria-pressed={!!active}>
      <LayerIcon viewBox="0 0 24 24" aria-hidden="true">{icons[icon]}</LayerIcon>
      <LayerName>{name}</LayerName>
    </LayerButton>
  );
}

/* ---------- tab bar ---------- */

const TabBar = styled.nav`
  position: relative;
  display: flex;
  flex-direction: column;
  align-items: center;
  padding-bottom: 24px;
  border-top: 3px solid #d2d6e2;
  background: #fdfdfe;
`;

const Tabs = styled.div`
  display: grid;
  grid-template-columns: repeat(5, 1fr);
  width: 100%;
  padding-top: 14px;
`;

const Tab = styled.a<{ $active?: boolean }>`
  display: flex;
  flex-direction: column;
  align-items: center;
  gap: 2px;
  font-size: 34px;
  line-height: 42px;
  font-weight: 700;
  text-decoration: none;
  color: ${(p) => (p.$active ? "#2a2766" : "#636165")};
`;

const TabCircle = styled.span<{ $active?: boolean }>`
  display: grid;
  place-items: center;
  width: 120px;
  height: 120px;
  border: 6px solid ${(p) => (p.$active ? "#2a2766" : "#f3f1fc")};
  border-radius: 50%;
  background: ${(p) => (p.$active ? "#2a2766" : "#fdfdfe")};
  color: ${(p) => (p.$active ? "#fff" : "#2a2766")};
`;

const BrandButton = styled.button`
  display: grid;
  place-items: center;
  justify-self: center;
  width: 192px;
  height: 192px;
  margin: -50px 0 0;
  border-radius: 50%;
  background: #2a2766;
`;

const HomeIndicator = styled.div`
  width: 462px;
  height: 15px;
  margin-top: 74px;
  border-radius: 8px;
  background: #000;
`;

const compassTicks = Array.from({ length: 16 }, (_, i) => i * 22.5);

export default function App() {
  return (
    <Page>
      <GlobalStyle />
      <MapStage>
        <WeatherMap />
        <StatusBar>
          <StatusGroup $gap={12}>
            <Clock>6:53</Clock>
            <svg width="44" height="46" viewBox="0 0 44 46" aria-label="Silent mode">
              <path d="M22 1c-4 0-6.500 2.500-7 5-5 2-8 7-8 13 0 8-2 10-5 14-1.500 2-.5 4 2 4h36c2.500 0 3.500-2 2-4-3-4-5-6-5-14 0-6-3-11-8-13-.5-2.500-3-5-7-5z" />
              <path d="M14.500 39.500h15c-1 3.500-4 5.500-7.500 5.500s-6.500-2-7.500-5.500z" />
              <path d="M4 1L43 42" stroke="#e6e5d2" strokeWidth="7" />
              <path d="M2 4L42 43" stroke="#000" strokeWidth="3.500" strokeLinecap="round" />
            </svg>
          </StatusGroup>
          <StatusGroup $gap={23}>
            <svg width="66" height="42" viewBox="0 0 66 42" aria-label="Signal">
              <rect x="0" y="25" width="11" height="16" rx="4" />
              <g opacity="0.22">
                <rect x="18" y="18" width="11" height="23" rx="4" />
                <rect x="36" y="9" width="11" height="32" rx="4" />
                <rect x="54" y="0" width="11" height="41" rx="4" />
              </g>
            </svg>
            <svg width="58" height="42" viewBox="0 0 58 42" aria-label="Wi-Fi">
              <g fill="none" stroke="#000" strokeWidth="8">
                <path d="M3.500 14.500a37 37 0 0 1 51 0" />
                <path d="M13 25a23 23 0 0 1 32 0" />
              </g>
              <path d="M29 41.500L20 32.300a13 13 0 0 1 18 0z" />
            </svg>
            <svg width="94" height="46" viewBox="0 0 94 46" aria-label="Battery charging">
              <rect x="1.500" y="2.500" width="83" height="41" rx="13" fill="none" stroke="#000" strokeOpacity="0.38" strokeWidth="3" />
              <path d="M88 16q5 2 5 7t-5 7z" opacity="0.4" />
              <rect x="7" y="9" width="18" height="28" rx="9" fill="#2bb659" />
              <path d="M49 1L27 26h12l-4 20l22-26H46z" />
            </svg>
          </StatusGroup>
        </StatusBar>
        <Compass type="button" aria-label="Compass">
          <svg width="114" height="114" viewBox="-57 -57 114 114">
            <circle r="57" />
            <g stroke="#fff" strokeWidth="2.400">
              {compassTicks.map((a) => <path key={a} d="M0 -48V-37" transform={`rotate(${a})`} />)}
            </g>
            <path d="M0 -30L12 -6H-12z" fill="#ff4f2e" />
            <path d="M-9 25V1L9 25V1" fill="none" stroke="#e8e8e8" strokeWidth="2.200" />
          </svg>
        </Compass>
        <MapTools>
          <ToolButton type="button" $tone="#121116" aria-label="My location"><MdNearMe size={72} /></ToolButton>
          <ToolButton type="button" $tone="#47454f" aria-label="Layers"><MdOutlineLayers size={72} /></ToolButton>
        </MapTools>
      </MapStage>

      <Sheet>
        <Handle />
        <LayerGrid>
          <Layer icon="all" name="All" active />
          <Layer icon="wind" name="Wind" />
          <Layer icon="solar" name="Solar" />
          <Layer icon="battery" name="Battery" />
          <Layer icon="oil" name="O&G" column={3} />
        </LayerGrid>
        <SheetTitle>Weather layer</SheetTitle>
        <LayerGrid>
          <Layer icon="temperature" name="Air temperature" />
          <Layer icon="humidity" name="Relative humidity" />
          <Layer icon="cloudiness" name="Cloudiness" />
          <Layer icon="accumulated" name="Accumulated precipitation" active />
          <Layer icon="intensity" name="Precipitation intensity" />
          <Layer icon="windSpeed" name="Wind speed and direction" />
        </LayerGrid>
      </Sheet>

      <TabBar>
        <Tabs>
          <Tab href="#jobs">
            <TabCircle>
              <svg width="84" height="84" viewBox="0 0 24 24" fill="currentColor">
                <path d="M19 3h-1V1h-2v2H8V1H6v2H5c-1.110 0-1.990.9-1.990 2L3 19c0 1.100.89 2 2 2h14c1.100 0 2-.9 2-2V5c0-1.100-.9-2-2-2zm0 16H5V8h14v11zM7 10h5v5H7z" />
              </svg>
            </TabCircle>
            Jobs
          </Tab>
          <Tab href="#time">
            <TabCircle>
              <svg width="84" height="84" viewBox="0 0 24 24" fill="currentColor">
                <circle cx="12" cy="12" r="10" />
                <path d="M11 7h1.500v6H7v-1.500h4z" fill="#fff" />
              </svg>
            </TabCircle>
            Time
          </Tab>
          <BrandButton type="button" aria-label="Home">
            <svg width="96" height="68" viewBox="0 0 96 68">
              <path d="M31 0H62C80 0 89 14 96 34C89 54 80 68 62 68H31L38 54H60C71 54 77 46 83 34C77 22 71 14 60 14H38z" fill="#fff" />
              <path d="M0 0H16L33 34L16 68H0L19 34z" fill="#fff" />
              <path d="M0 68L15 43L25 50L16 68z" fill="#dfe2ee" />
              <path d="M16 0H31L49 34L31 68H16L33 34z" fill="#d0352c" />
              <path d="M16 68L22 55L31 68z" fill="#ff3225" />
            </svg>
          </BrandButton>
          <Tab href="#map" $active aria-current="page">
            <TabCircle $active>
              <svg width="84" height="84" viewBox="0 0 24 24" fill="#2a2766">
                <path d="M3 5L9 3L15 5L21 3V19L15 21L9 19L3 21z" fill="#fff" stroke="#fff" strokeWidth="0.300" strokeLinejoin="round" />
                <path d="M10 5.400L14 6.700V18.500L10 17.100zM16 6.700L19 5.600V17.300L16 18.400z" />
                <path d="M5 6.300L7.900 5.300V17.200L5 18.200z" />
                {[0, 2.7, 5.4, 8.1].map((dy) => (
                  <path key={dy} transform={`translate(0 ${dy})`} d="M5.400 6.900L7.500 6.200V8.500L5.400 9.200z" fill="#fff" />
                ))}
              </svg>
            </TabCircle>
            Map
          </Tab>
          <Tab href="#forms">
            <TabCircle><MdFolder size={84} /></TabCircle>
            Forms
          </Tab>
        </Tabs>
        <HomeIndicator />
      </TabBar>
    </Page>
  );
}
